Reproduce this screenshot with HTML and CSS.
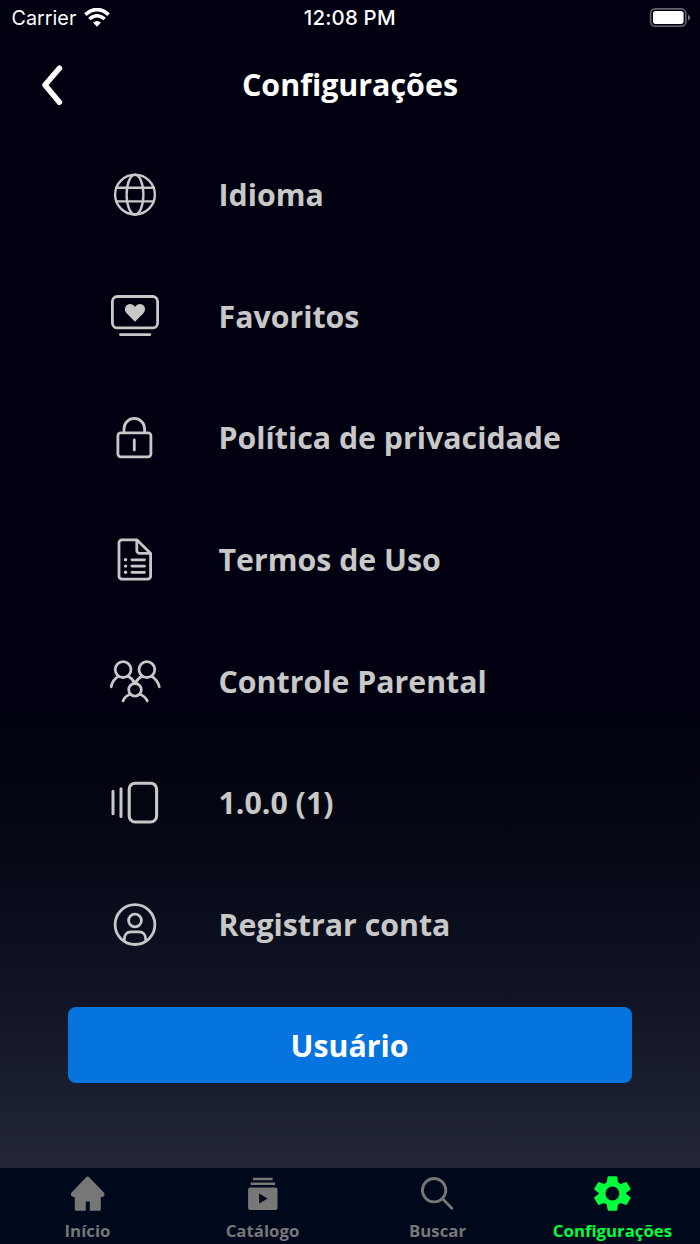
FILE: index.html
```html
<!DOCTYPE html>
<html lang="pt-BR">
<head>
<meta charset="utf-8">
<title>Configurações</title>
<link rel="stylesheet" href="styles.css">
</head>
<body>
<div class="screen">
  <div class="status">
    <div class="carrier"><span>Carrier</span>
      <svg width="26" height="20" viewBox="0 0 26 20"><g fill="none" stroke="#fff"><path d="M1.4 6.6Q13-3.4 24.6 6.6" stroke-width="3.8"/><path d="M5.4 11Q13 4.5 20.6 11" stroke-width="3.6"/></g><path d="M9 14.6Q13 11.4 17 14.6L13 18.7Z" fill="#fff"/></svg>
    </div>
    <div class="time">12:08 PM</div>
    <div class="battery">
      <svg width="42" height="20" viewBox="0 0 42 20"><rect x="1.6" y="0.9" width="35.2" height="17.4" rx="4.5" fill="none" stroke="#67666e" stroke-width="1.6"/><rect x="4" y="3.1" width="30.6" height="12.8" rx="2.6" fill="#fff"/><path d="M39 6.8Q41.2 8 41.2 9.7T39 12.6Z" fill="#77767e"/></svg>
    </div>
  </div>
  <header class="header">
    <svg class="back" width="28" height="44" viewBox="0 0 28 44"><path d="M21.4 5.2 7 22 21.4 39.2" fill="none" stroke="#fff" stroke-width="5.6" stroke-linecap="round" stroke-linejoin="round"/></svg>
    <h1 class="title">Configurações</h1>
  </header>
  <main class="menu">
    <div class="row">
      <svg class="icon" viewBox="0 0.4 60 60"><g stroke-width="2.4"><circle cx="30" cy="30" r="19.9"/><ellipse cx="30" cy="30" rx="8.4" ry="19.9"/><path d="M11.4 23.2h37.2M11.4 36.8h37.2"/></g></svg>
      <span class="label">Idioma</span>
    </div>
    <div class="row">
      <svg class="icon" viewBox="0 0.5 60 60"><rect x="7.4" y="10" width="45.2" height="31.4" rx="5"/><path d="M15.4 48.1h29.4"/><path class="solid" d="M30 35.3 21.8 27C19.2 24.3 19.4 20.4 22 18.6C24.8 16.7 28.1 17.6 30 20.5C31.9 17.6 35.2 16.7 38 18.6C40.6 20.4 40.8 24.3 38.2 27Z"/></svg>
      <span class="label">Favoritos</span>
    </div>
    <div class="row">
      <svg class="icon" viewBox="0 0 60 60"><rect x="12.9" y="24.9" width="33" height="24" rx="2.8"/><path d="M19 24V20.7a10.3 10.3 0 0 1 20.6 0V24M29.3 32v10"/></svg>
      <span class="label">Política de privacidade</span>
    </div>
    <div class="row">
      <svg class="icon" viewBox="0 0.4 60 60"><path d="M31.8 10.2H17a3 3 0 0 0-3 3v33.4a3 3 0 0 0 3 3h25.6a3 3 0 0 0 3-3V23.8ZM31.8 10.2v10.6a3 3 0 0 0 3 3H45.6"/><path d="M26.9 30.2h12.6M26.9 36.5h12.6M26.9 42.7h12.6"/><g class="solid"><circle cx="20.6" cy="30.2" r="1.7"/><circle cx="20.6" cy="36.5" r="1.7"/><circle cx="20.6" cy="42.7" r="1.7"/></g></svg>
      <span class="label">Termos de Uso</span>
    </div>
    <div class="row">
      <svg class="icon" viewBox="0 0.4 60 60"><circle cx="18.1" cy="18" r="7.9"/><circle cx="41.9" cy="18" r="7.9"/><circle cx="30" cy="38.2" r="6.3"/><path d="M6.2 35.2Q7.2 28.3 13.6 24.5M22.6 24.5Q27.4 27 30 31.9Q32.6 27 37.4 24.5M46.4 24.5Q52.8 28.3 54.3 35.2M18 49.3Q19.8 44.7 25.4 42.7M34.6 42.7Q40.2 44.7 42.3 49.3"/></svg>
      <span class="label">Controle Parental</span>
    </div>
    <div class="row">
      <svg class="icon" viewBox="0 0 60 60"><path d="M8 18.3v22.5M16 15.8v27.6" stroke-width="3"/><rect x="24.2" y="10.2" width="27.4" height="38.8" rx="6" stroke-width="3.1"/></svg>
      <span class="label">1.0.0 (1)</span>
    </div>
    <div class="row">
      <svg class="icon" viewBox="0 0.3 60 60"><circle cx="30" cy="29.9" r="19.9"/><circle cx="30" cy="25.8" r="6.4"/><path d="M19.2 45.6C19.4 40 21 37.2 26 37.2h8C39 37.2 40.6 40 40.8 45.6"/></svg>
      <span class="label">Registrar conta</span>
    </div>
  </main>
  <button class="primary">Usuário</button>
  <nav class="tabs">
    <div class="tab">
      <svg class="tab-icon" viewBox="0.4 0 44 44"><path d="M20.5 5.3Q22 3.8 23.6 5.3L38.2 20.5Q40.3 23.6 36.8 25H35.2V37.5Q35.2 38.7 34 38.7H24.2V29.5H20.2V38.7H10.6Q9.2 38.7 9.2 37.5V25H7.5Q3.9 23.6 6 20.5Z"/></svg>
      <span class="tab-label">Início</span>
    </div>
    <div class="tab">
      <svg class="tab-icon" viewBox="0.4 0 44 44"><path d="M12.4 5.8H32V8.2H12.4ZM10 10.5H34.5V13H10Z"/><path fill-rule="evenodd" d="M9.3 15.5H35.1Q36.9 15.5 36.9 17.3V36.1Q36.9 37.9 35.1 37.9H9.3Q7.5 37.9 7.5 36.1V17.3Q7.5 15.5 9.3 15.5ZM18.5 21.5V31.5L27 26.5Z"/></svg>
      <span class="tab-label">Catálogo</span>
    </div>
    <div class="tab">
      <svg class="tab-icon" viewBox="0.4 0 44 44"><g fill="none" stroke="currentColor" stroke-width="2.8" stroke-linecap="round"><circle cx="18.5" cy="18.2" r="11.7"/><path d="M27 26.8 36.2 36.3"/></g></svg>
      <span class="tab-label">Buscar</span>
    </div>
    <div class="tab active">
      <svg class="tab-icon" viewBox="0.5 0 44 44"><path fill-rule="evenodd" d="M17.9 4.3H25.9L26.7 4.9 27.5 10.3 30.2 12 35.5 9.9 36.1 10.2 40.2 17 40 17.6 35.5 21.1V21.7L40 25.3 40.2 26 36.1 32.8 35.5 33 30.2 31 27.5 32.6 26.7 38 25.9 38.7H17.9L17.1 38 16.3 32.6 13.6 31 8.3 33 7.7 32.8 3.6 26 3.8 25.3 8.3 21.9V21.1L3.8 17.6 3.6 17 7.7 10.2 8.3 9.9 13.6 12 16.3 10.3 17.1 4.9ZM21.9 14.6a6.9 6.9 0 1 0 .01 0Z"/></svg>
      <span class="tab-label">Configurações</span>
    </div>
  </nav>
</div>
</body>
</html>
```

FILE: styles.css
```css
* { box-sizing: border-box; }
body { margin: 0; background: #000010; }
.screen {
  display: flex;
  flex-direction: column;
  width: 700px;
  height: 1244px;
  overflow: hidden;
  background: linear-gradient(#000010 0, #000010 680px, #030510 800px, #090c1a 900px, #111424 1000px, #1a1f2f 1090px, #222638 1168px);
  font-family: "Open Sans", sans-serif;
  font-weight: 700;
  color: #fff;
}
.status {
  display: grid;
  grid-template-columns: 1fr auto 1fr;
  align-items: center;
  height: 36px;
  padding: 0 9px 0 11.5px;
  font-family: Inter, sans-serif;
  font-size: 19.8px;
  font-weight: 400;
}
.carrier { display: flex; align-items: center; gap: 8px; }
.time { margin-right: 3px; padding-bottom: 2px; font-size: 20.4px; font-weight: 500; letter-spacing: 0.2px; }
.battery { display: flex; justify-content: flex-end; }
.header {
  display: grid;
  grid-template-columns: 28px 1fr 28px;
  align-items: center;
  height: 98px;
  padding: 0 38px;
}
.title { margin: 0; text-align: center; font-size: 30.4px; line-height: 40px; }
.menu { display: flex; flex-direction: column; }
.row { display: flex; align-items: center; height: 121.7px; padding-left: 105px; gap: 53.5px; }
.icon {
  width: 60px;
  height: 60px;
  fill: none;
  stroke: #c8c8c8;
  stroke-width: 2.8;
  stroke-linecap: round;
  stroke-linejoin: round;
}
.solid { fill: #c8c8c8; stroke: none; }
.label { font-size: 30.3px; line-height: 40px; color: #c8c8c8; white-space: nowrap; }
.primary {
  height: 76px;
  margin: 21px 68px 0;
  padding: 2px 1px 0 0;
  border: 0;
  border-radius: 8px;
  background: #0574df;
  color: #fff;
  font: inherit;
  font-size: 30.3px;
}
.tabs {
  display: grid;
  grid-template-columns: repeat(4, 1fr);
  height: 76px;
  margin-top: auto;
  background: #00081c;
}
.tab { display: flex; flex-direction: column; align-items: center; padding-top: 4px; color: #777; }
.active { color: #00ff3c; }
.tab-icon { width: 44px; height: 44px; fill: currentColor; }
.tab-label { margin-top: 3px; font-size: 16.8px; line-height: 24px; }
```
